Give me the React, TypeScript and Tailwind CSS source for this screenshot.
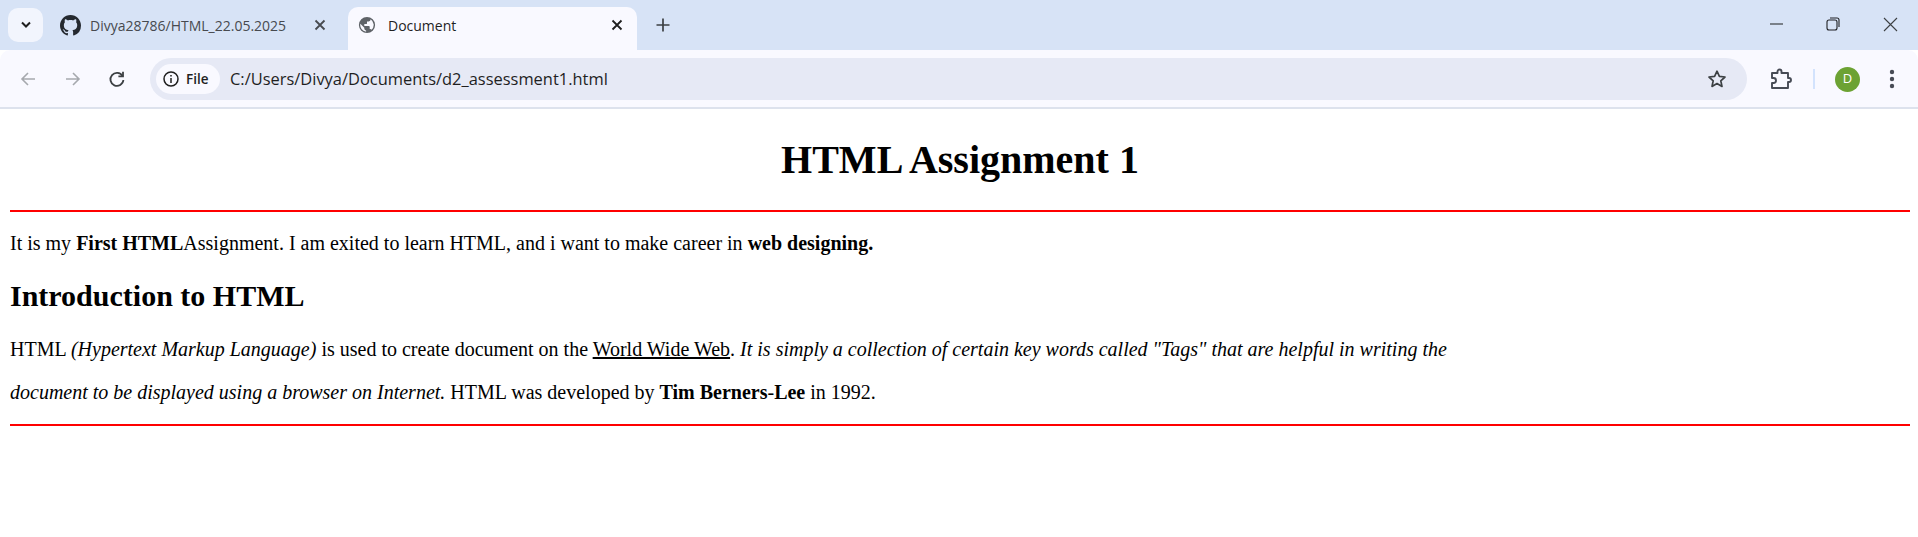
import React from "react";

const sans = "font-['Open_Sans','Noto_Sans',sans-serif]";

function GitHub() {
  return (
    <svg width="21" height="21" viewBox="0 0 16 16" fill="#24292f">
      <path d="M8 0C3.58 0 0 3.58 0 8c0 3.54 2.29 6.53 5.47 7.59.4.07.55-.17.55-.38 0-.19-.01-.82-.01-1.49-2.01.37-2.53-.49-2.69-.94-.09-.23-.48-.94-.82-1.13-.28-.15-.68-.52-.01-.53.63-.01 1.08.58 1.23.82.72 1.21 1.87.87 2.33.66.07-.52.28-.87.51-1.07-1.78-.2-3.64-.89-3.64-3.95 0-.87.31-1.59.82-2.15-.08-.2-.36-1.02.08-2.12 0 0 .67-.21 2.2.82.64-.18 1.32-.27 2-.27s1.36.09 2 .27c1.53-1.04 2.2-.82 2.2-.82.44 1.1.16 1.92.08 2.12.51.56.82 1.27.82 2.15 0 3.07-1.87 3.75-3.65 3.95.29.25.54.73.54 1.48 0 1.07-.01 1.93-.01 2.2 0 .21.15.46.55.38A8.01 8.01 0 0 0 16 8c0-4.42-3.58-8-8-8z" />
    </svg>
  );
}

function Globe() {
  return (
    <svg width="18" height="18" viewBox="0 0 20 20" fill="#5f6368">
      <path fillRule="evenodd" d="M10 1a9 9 0 1 0 0 18 9 9 0 0 0 0-18zM2.600 8.600 7 13v1c0 1 .9 2 2 2v1.400A7.500 7.500 0 0 1 2.600 8.600zM15 15.400A1.800 1.800 0 0 0 13.500 14.500H13V12a1 1 0 0 0-1-1H7V9h2a1 1 0 0 0 1-1V6h2a2 2 0 0 0 2-2v-.4a7.500 7.500 0 0 1 1 11.800z" />
    </svg>
  );
}

function X({ color, w = 1.8 }: { color: string; w?: number }) {
  return (
    <svg width="12" height="12" viewBox="0 0 12 12" stroke={color} strokeWidth={w} fill="none">
      <path d="M1.500 1.500l9 9M10.500 1.500l-9 9" />
    </svg>
  );
}

function NavArrow({ dir }: { dir: "l" | "r" }) {
  return (
    <svg width="18" height="18" viewBox="0 0 18 18" stroke="#a6a9ae" strokeWidth="1.6" fill="none">
      {dir === "l" ? <path d="M16 9H3M9 3L3 9l6 6" /> : <path d="M2 9h13M9 3l6 6-6 6" />}
    </svg>
  );
}

export default function App() {
  return (
    <div className="w-[1918px] h-[537px] overflow-hidden bg-white flex flex-col">
      {/* Tab strip */}
      <div className="h-[50px] bg-[#d7e3f6] flex items-end shrink-0 pl-[8px]">
        <div className="self-start mt-[8px] w-[35px] h-[34px] rounded-[10px] bg-[#f2f5fd] flex items-center justify-center">
          <svg width="12" height="8" viewBox="0 0 12 8" stroke="#1f1f1f" strokeWidth="2" fill="none">
            <path d="M2 1.500l4 4 4-4" />
          </svg>
        </div>
        <div className="ml-[17px] h-[43px] flex items-center pb-[7px]">
          <GitHub />
          <span className={`ml-[9px] text-[14px] text-[#474a4f] whitespace-nowrap w-[224px] ${sans}`}>Divya28786/HTML_22.05.2025</span>
          <X color="#474a4f" />
        </div>
        <div className="ml-[22px] w-[289px] h-[43px] bg-[#f9f9ff] rounded-t-[10px] flex items-center pl-[10px] pb-[7px]">
          <Globe />
          <span className={`ml-[12px] text-[14px] text-[#1f1f1f] whitespace-nowrap w-[223px] ${sans}`}>Document</span>
          <X color="#1f1f1f" />
        </div>
        <div className="ml-[18px] h-[43px] flex items-center pb-[7px]">
          <svg width="16" height="16" viewBox="0 0 16 16" stroke="#3c4043" strokeWidth="1.7" fill="none">
            <path d="M8 1.500v13M1.500 8h13" />
          </svg>
        </div>
        <div className="ml-auto flex items-center h-[50px] pb-[2px] pr-[20px]">
          <svg width="14" height="14" viewBox="0 0 14 14" stroke="#3c4043" strokeWidth="1.2" fill="none"><path d="M0 7h13" /></svg>
          <svg className="ml-[42px]" width="14" height="14" viewBox="0 0 14 14" stroke="#202124" strokeWidth="1.1" fill="none">
            <rect x="1" y="3" width="10" height="10" rx="2" />
            <path d="M4 1h7a2 2 0 0 1 2 2v7" />
          </svg>
          <svg className="ml-[43px]" width="15" height="15" viewBox="0 0 15 15" stroke="#3c4043" strokeWidth="1.1" fill="none"><path d="M1 1l13 13M14 1L1 14" /></svg>
        </div>
      </div>
      {/* Toolbar */}
      <div className="h-[59px] bg-[#f9f9ff] rounded-t-[10px] flex items-center border-b-2 border-[#dde2ed] shrink-0 pt-[1px] pl-[19px]">
        <NavArrow dir="l" />
        <span className="ml-[27px] flex"><NavArrow dir="r" /></span>
        <svg className="ml-[26px]" width="18" height="18" viewBox="0 0 18 18" stroke="#3c4043" strokeWidth="1.8" fill="none">
          <path d="M14.500 6A6.500 6.500 0 1 0 15.400 10" />
          <path d="M15 1.800V6.400h-4.600" />
        </svg>
        <div className="ml-[24px] w-[1597px] h-[42px] rounded-full bg-[#e6e9f5] flex items-center pl-[6px] shrink-0">
          <div className="h-[30px] w-[64px] rounded-full bg-[#f9f9ff] flex items-center pl-[6px] gap-[6px] shrink-0">
            <svg width="18" height="18" viewBox="0 0 18 18" fill="none" stroke="#1f1f1f" strokeWidth="1.500">
              <circle cx="9" cy="9" r="7" />
              <path d="M9 8v5M9 5v1.600" />
            </svg>
            <span className={`text-[13.5px] font-semibold text-[#1f1f1f] ${sans}`}>File</span>
          </div>
          <span className={`ml-[10px] text-[16.45px] text-[#1f1f1f] whitespace-nowrap ${sans}`}>C:/Users/Divya/Documents/d2_assessment1.html</span>
          <svg className="ml-auto mr-[20px]" width="20" height="20" viewBox="0 0 20 20" stroke="#3c4043" strokeWidth="1.700" fill="none">
            <path d="M10 2.200l2.400 5.200 5.600.6-4.200 3.800 1.200 5.600-5-2.900-5 2.900 1.200-5.600L2 8l5.600-.6z" strokeLinejoin="round" />
          </svg>
        </div>
        <svg className="ml-[23px] shrink-0" width="22" height="22" viewBox="0 0 22 22" stroke="#474b55" strokeWidth="1.900" fill="none">
          <path d="M2 5h5.500V3.500a2 2 0 0 1 4 0V5H18v5h1a2 2 0 0 1 0 4h-1v6H2v-5h1.500a2.500 2.500 0 0 0 0-5H2z" strokeLinejoin="round" />
        </svg>
        <div className="ml-[21px] w-[2px] h-[20px] bg-[#d3e3fd] shrink-0" />
        <div className={`ml-[20px] w-[25px] h-[25px] rounded-full bg-[#6ca233] text-white text-[13px] flex items-center justify-center shrink-0 ${sans}`}>D</div>
        <svg className="ml-[29px] shrink-0" width="6" height="20" viewBox="0 0 6 20" fill="#474b55">
          <circle cx="3" cy="3" r="2.200" /><circle cx="3" cy="10" r="2.200" /><circle cx="3" cy="17" r="2.200" />
        </svg>
      </div>
      {/* Page */}
      <div className="font-['Liberation_Serif',serif] text-black pl-[10px] pr-[8px] text-[20px]">
        <h1 className="text-[40px] font-bold text-center mt-[28px] leading-[46px]">HTML Assignment 1</h1>
        <hr className="mt-[27px] border-0 h-[2px] bg-[#ff0000]" />
        <p className="mt-[20px] leading-[22px]">
          It is my <b>First HTML</b>Assignment. I am exited to learn HTML, and i want to make career in <b>web designing.</b>
        </p>
        <h2 className="text-[30px] font-bold mt-[25px] leading-[34px]">Introduction to HTML</h2>
        <p className="mt-[15px] leading-[43px] w-[1470px]">
          HTML <i>(Hypertext Markup Language)</i> is used to create document on the <u>World Wide Web</u>. <i>It is simply a collection of certain key words called "Tags" that are helpful in writing the document to be displayed using a browser on Internet.</i> HTML was developed by <b>Tim Berners</b>-<b>Lee</b> in 1992.
        </p>
        <hr className="mt-[10px] border-0 h-[2px] bg-[#ff0000]" />
      </div>
    </div>
  );
}
